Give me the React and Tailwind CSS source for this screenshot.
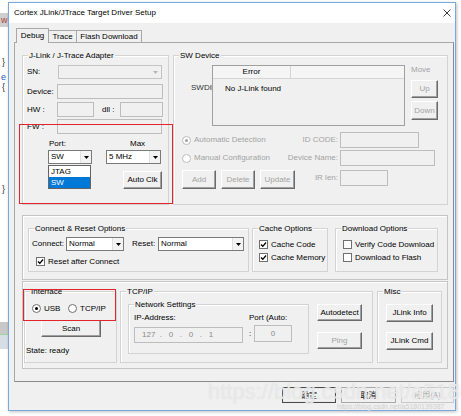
import React from "react";

const Arrow = ({ c = "#000" }) => (
  <svg width="5" height="3" viewBox="0 0 5 3">
    <path d="M0 0H5L2.5 3Z" fill={c} />
  </svg>
);

function Group({ label, className, children }) {
  return (
    <div className={"relative border border-[#d3d3d3] shadow-[inset_1px_1px_0_#ffffff] " + className}>
      <span className="absolute -top-[5px] left-[5px] bg-[#f0f0f0] px-[1px] leading-[9px] whitespace-nowrap">{label}</span>
      {children}
    </div>
  );
}

function Field({ className = "", children }) {
  return <div className={"border border-[#bdbdbd] bg-[#f0f0f0] flex items-center " + className}>{children}</div>;
}

function Combo({ value, className = "", disabled }) {
  return (
    <div className={"flex items-stretch border " + (disabled ? "border-[#c4c4c4] bg-[#f0f0f0] " : "border-[#7a7a7a] bg-white ") + className}>
      <span className="flex-1 pl-[2px] flex items-center leading-none">{value}</span>
      <span className={"w-[11px] flex items-center justify-center " + (disabled ? "" : "bg-[#f3f3f3] border-l border-[#e0e0e0]")}>
        <Arrow c={disabled ? "#b5b5b5" : "#000"} />
      </span>
    </div>
  );
}

function Btn({ children, className = "", disabled }) {
  return (
    <div
      className={
        "flex items-center justify-center bg-[#f0f0f0] border border-t-white border-l-white border-r-[#6b6b6b] border-b-[#6b6b6b] shadow-[inset_-1px_-1px_0_#a0a0a0] leading-none " +
        (disabled ? "text-[#a3a3a3] " : "text-black ") +
        className
      }
    >
      {children}
    </div>
  );
}

function Check({ label }) {
  return (
    <div className="flex items-center h-[9px]">
      <span className="w-[9px] h-[9px] border border-[#707070] bg-white flex items-center justify-center">
        <svg width="7" height="7" viewBox="0 0 7 7">
          <path d="M1 3.5L2.8 5.3L6 1.5" stroke="#000" strokeWidth="1.3" fill="none" />
        </svg>
      </span>
      <span className="ml-[3px] leading-none whitespace-nowrap">{label}</span>
    </div>
  );
}

function Box({ label }) {
  return (
    <div className="flex items-center h-[9px]">
      <span className="w-[9px] h-[9px] border border-[#707070] bg-white" />
      <span className="ml-[3px] leading-none whitespace-nowrap">{label}</span>
    </div>
  );
}

function Radio({ label, on, disabled, className = "" }) {
  return (
    <div className={"flex items-center h-[9px] " + className}>
      <span className={"w-[9px] h-[9px] rounded-full border bg-white flex items-center justify-center " + (disabled ? "border-[#bcbcbc]" : "border-[#707070]")}>
        {on && <span className={"w-[3px] h-[3px] rounded-full " + (disabled ? "bg-[#a0a0a0]" : "bg-black")} />}
      </span>
      <span className={"ml-[3px] leading-none whitespace-nowrap " + (disabled ? "text-[#a3a3a3]" : "")}>{label}</span>
    </div>
  );
}

export default function App() {
  return (
    <div className="relative w-[461px] h-[416px] bg-white flex overflow-hidden text-[8px] text-black font-['Liberation_Sans',Arial,'Noto_Sans_CJK_SC',sans-serif]">
      {/* background editor strip */}
      <div className="w-[8px] flex flex-col text-[9px] leading-none">
        <div className="mt-[13px] h-[14px] bg-[#cfcfcf] text-[#b04040] pl-[1px] flex items-center">w</div>
        <div className="mt-[31px] pl-[2px] text-[#333]">{"}"}</div>
        <div className="mt-[6px] pl-[1px] text-[#2a56c6]">e</div>
        <div className="mt-[1px] pl-[2px] text-[#333]">{"{"}</div>
        <div className="mt-[93px] pl-[2px] text-[#333]">{"}"}</div>
        <div className="mt-[128px] h-[12px] bg-[#c8c8c8]" />
        <div className="h-[1px] bg-[#9fd39a]" />
        <div className="h-[14px] bg-[#d6dde5]" />
      </div>

      {/* dialog window */}
      <div className="mt-[2px] w-[448px] h-[409px] border border-[#7aa7dc] bg-[#f0f0f0] flex flex-col shadow-[1px_1px_3px_rgba(0,0,0,0.25)]">
        <div className="h-[20px] bg-white flex items-center pl-[5px] pr-[4px]">
          <span className="flex-1">Cortex JLink/JTrace Target Driver Setup</span>
          <svg width="8" height="8" viewBox="0 0 8 8">
            <path d="M0.5 0.5L7.5 7.5M7.5 0.5L0.5 7.5" stroke="#222" strokeWidth="0.9" />
          </svg>
        </div>

        {/* tabs */}
        <div className="flex items-end ml-[7px] mt-[5px] h-[15px] relative z-10 -mb-px">
          <div className="h-[15px] w-[33px] border border-b-0 border-[#a8a8a8] bg-[#f0f0f0] flex items-center justify-center">Debug</div>
          <div className="h-[13px] w-[28px] border border-l-0 border-[#a8a8a8] flex items-center justify-center">Trace</div>
          <div className="h-[13px] w-[65px] border border-l-0 border-[#a8a8a8] flex items-center justify-center">Flash Download</div>
        </div>

        {/* tab panel */}
        <div className="ml-[5px] w-[440px] h-[340px] border border-[#a8a8a8] border-r-[#8a8a8a] border-b-[#8a8a8a] flex flex-col">
          <div className="flex mt-[12px] ml-[7px]">
            {/* J-Link adapter */}
            <Group label="J-Link / J-Trace Adapter" className="w-[147px] h-[150px]">
              <div className="flex flex-col pt-[9px] pl-[4px]">
                <div className="flex items-center h-[14px]">
                  <span className="w-[31px]">SN:</span>
                  <Combo disabled className="w-[104px] h-[14px]" />
                </div>
                <div className="flex items-center h-[15px] mt-[5px]">
                  <span className="w-[30px]">Device:</span>
                  <Field className="w-[106px] h-[15px]" />
                </div>
                <div className="flex items-center h-[15px] mt-[3px]">
                  <span className="w-[30px]">HW :</span>
                  <Field className="w-[37px] h-[15px]" />
                  <span className="w-[26px] pl-[8px]">dll :</span>
                  <Field className="w-[43px] h-[15px]" />
                </div>
                <div className="flex items-center h-[15px] mt-[2px]">
                  <span className="w-[30px]">FW :</span>
                  <Field className="w-[105px] h-[15px]" />
                </div>
                <div className="flex mt-[5px]">
                  <div className="ml-[21px] w-[44px] flex flex-col">
                    <span className="leading-[9px] pl-[1px]">Port:</span>
                    <div className="relative mt-[2px]">
                      <Combo value="SW" className="w-[44px] h-[14px]" />
                      <div className="absolute left-0 top-[15px] w-[43px] h-[24px] bg-white border border-[#646464] flex flex-col z-20">
                        <span className="h-[11px] pl-[2px] flex items-center">JTAG</span>
                        <span className="h-[11px] pl-[2px] flex items-center bg-[#0078d7] text-white">SW</span>
                      </div>
                    </div>
                  </div>
                  <div className="ml-[14px] w-[55px] flex flex-col">
                    <span className="leading-[9px] pl-[24px]">Max</span>
                    <Combo value="5 MHz" className="mt-[2px] w-[55px] h-[14px]" />
                    <Btn className="mt-[7px] ml-[17px] w-[39px] h-[18px]">Auto Clk</Btn>
                  </div>
                </div>
              </div>
            </Group>

            {/* SW device */}
            <Group label="SW Device" className="ml-[4px] w-[275px] h-[150px]">
              <div className="flex flex-col pt-[9px]">
                <div className="flex">
                  <span className="pl-[17px] w-[38px] mt-[17px] text-[#333]">SWDI</span>
                  <div className="w-[193px] h-[61px] border border-[#a0a0a0] bg-[#f0f0f0] flex flex-col">
                    <div className="flex h-[13px] border-b border-[#d5d5d5] bg-[#f5f5f5]">
                      <span className="w-[78px] border-r border-[#d5d5d5] flex items-center justify-center">Error</span>
                    </div>
                    <span className="pl-[12px] mt-[4px]">No J-Link found</span>
                  </div>
                  <div className="ml-[6px] w-[27px] flex flex-col">
                    <span className="mt-[1px] leading-[8px] text-[#a3a3a3]">Move</span>
                    <Btn disabled className="mt-[6px] w-[27px] h-[18px]">Up</Btn>
                    <Btn disabled className="mt-[3px] w-[27px] h-[19px]">Down</Btn>
                  </div>
                </div>
                <div className="flex items-center h-[16px] mt-[6px] pl-[8px]">
                  <Radio on disabled label="Automatic Detection" className="w-[120px]" />
                  <span className="w-[36px] text-right text-[#a3a3a3]">ID CODE:</span>
                  <Field className="ml-[2px] w-[79px] h-[16px]" />
                </div>
                <div className="flex items-center h-[16px] mt-[2px] pl-[8px]">
                  <Radio disabled label="Manual Configuration" className="w-[104px]" />
                  <span className="w-[52px] text-right text-[#a3a3a3]">Device Name:</span>
                  <Field className="ml-[2px] w-[95px] h-[16px]" />
                </div>
                <div className="flex items-start mt-[4px] pl-[8px]">
                  <div className="w-[128px] flex">
                    <Btn disabled className="w-[34px] h-[19px]">Add</Btn>
                    <Btn disabled className="ml-[5px] w-[34px] h-[19px]">Delete</Btn>
                    <Btn disabled className="ml-[5px] w-[35px] h-[19px]">Update</Btn>
                  </div>
                  <span className="w-[28px] h-[16px] flex items-center justify-end text-[#a3a3a3]">IR len:</span>
                  <Field className="ml-[2px] w-[48px] h-[16px]" />
                </div>
              </div>
            </Group>
          </div>

          {/* connect / cache / download */}
          <div className="mt-[10px] ml-[7px] w-[426px] h-[65px] border border-[#c4c4c4] shadow-[inset_1px_1px_0_#ffffff] flex pt-[12px] pl-[5px]">
            <Group label="Connect & Reset Options" className="w-[221px] h-[44px]">
              <div className="flex items-center pt-[8px] pl-[3px]">
                <span className="w-[34px]">Connect:</span>
                <Combo value="Normal" className="w-[58px] h-[14px]" />
                <span className="ml-[8px] w-[26px]">Reset:</span>
                <Combo value="Normal" className="w-[86px] h-[14px]" />
              </div>
              <div className="mt-[6px] pl-[7px]">
                <Check label="Reset after Connect" />
              </div>
            </Group>
            <Group label="Cache Options" className="ml-[3px] w-[76px] h-[44px]">
              <div className="flex flex-col gap-[4px] pt-[11px] pl-[6px]">
                <Check label="Cache Code" />
                <Check label="Cache Memory" />
              </div>
            </Group>
            <Group label="Download Options" className="ml-[7px] w-[103px] h-[44px]">
              <div className="flex flex-col gap-[4px] pt-[11px] pl-[7px]">
                <Box label="Verify Code Download" />
                <Box label="Download to Flash" />
              </div>
            </Group>
          </div>

          {/* interface / tcp / misc */}
          <div className="mt-[1px] ml-[7px] w-[426px] h-[88px] border border-[#c4c4c4] shadow-[inset_1px_1px_0_#ffffff] flex pt-[9px] pl-[1px]">
            <Group label="Interface" className="w-[93px] h-[72px]">
              <div className="flex flex-col pt-[12px]">
                <div className="flex pl-[7px]">
                  <Radio on label="USB" className="w-[36px]" />
                  <Radio label="TCP/IP" />
                </div>
                <Btn className="mt-[7px] ml-[16px] w-[60px] h-[17px]">Scan</Btn>
                <span className="mt-[10px] pl-[1px] leading-[8px]">State: ready</span>
              </div>
            </Group>
            <Group label="TCP/IP" className="ml-[3px] w-[253px] h-[72px]">
              <div className="flex pt-[12px] pl-[7px]">
                <Group label="Network Settings" className="w-[181px] h-[50px]">
                  <div className="flex pt-[9px] pl-[5px]">
                    <div className="flex flex-col w-[109px]">
                      <span className="leading-[8px]">IP-Address:</span>
                      <Field className="mt-[5px] w-[109px] h-[16px] text-[#8a8a8a]">
                        <span className="pl-[7px] whitespace-pre">127  .   0   .   0   .   1</span>
                      </Field>
                    </div>
                    <div className="flex flex-col ml-[6px]">
                      <span className="leading-[8px] whitespace-nowrap">Port (Auto:</span>
                      <div className="flex items-center mt-[3px]">
                        <span className="w-[5px]">:</span>
                        <Field className="w-[38px] h-[17px] justify-center text-[#8a8a8a]">0</Field>
                      </div>
                    </div>
                  </div>
                </Group>
                <div className="ml-[8px] flex flex-col">
                  <Btn className="w-[45px] h-[17px]">Autodetect</Btn>
                  <Btn disabled className="mt-[11px] w-[45px] h-[17px]">Ping</Btn>
                </div>
              </div>
            </Group>
            <Group label="Misc" className="ml-[4px] w-[65px] h-[72px]">
              <div className="flex flex-col pt-[12px] pl-[8px]">
                <Btn className="w-[47px] h-[18px]">JLink Info</Btn>
                <Btn className="mt-[10px] w-[47px] h-[18px]">JLink Cmd</Btn>
              </div>
            </Group>
          </div>
        </div>

        {/* dialog buttons */}
        <div className="flex justify-end mt-[5px] pr-[1px] font-['Noto_Sans_CJK_SC',sans-serif]">
          <div className="w-[54px] h-[16px] border border-[#4a4a4a] bg-[#f0f0f0] flex items-center justify-center shadow-[inset_0_0_0_1px_#e8e8e8]">确定</div>
          <div className="ml-[5px] w-[55px] h-[16px] border border-[#a8a8a8] bg-[#f0f0f0] flex items-center justify-center">取消</div>
          <div className="ml-[5px] w-[53px] h-[16px] border border-[#c8c8c8] bg-[#f0f0f0] flex items-center justify-center text-[#a3a3a3]">应用(A)</div>
        </div>
      </div>

      {/* red annotations */}
      <div className="absolute left-[19px] top-[124px] w-[154px] h-[80px] border border-[#e0262b] pointer-events-none" />
      <div className="absolute left-[23px] top-[289px] w-[93px] h-[32px] border border-[#e0262b] pointer-events-none" />

      {/* watermark */}
      <div className="absolute left-[208px] top-[381px] text-[22px] leading-none text-white/50 [text-shadow:0_0_1px_#d0d0d0] pointer-events-none whitespace-nowrap">https://blog.csdn.net/a5180139387</div>
      <div className="absolute left-[337px] top-[403px] text-[7px] leading-none text-[#cfcfcf] pointer-events-none whitespace-nowrap">https://blog.csdn.net/a5180139387</div>
    </div>
  );
}
